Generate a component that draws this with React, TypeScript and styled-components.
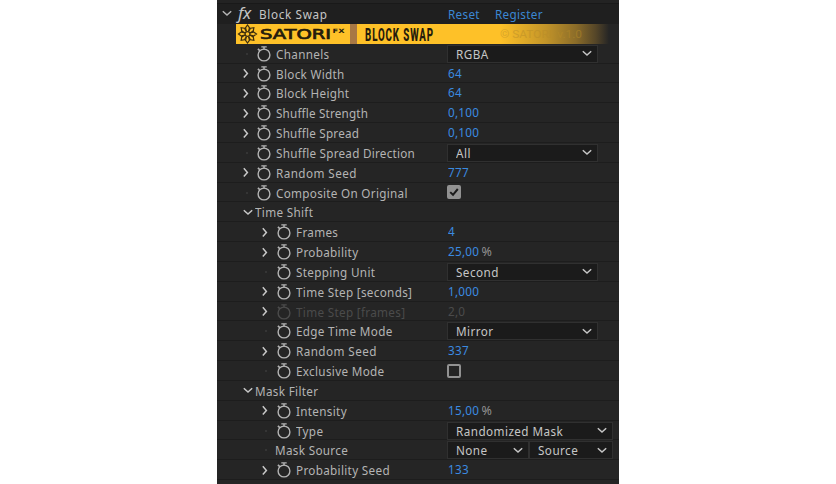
import React from 'react';
import styled, { createGlobalStyle, css } from 'styled-components';

const GlobalStyle = createGlobalStyle`
  * { box-sizing: border-box; }
  body { margin: 0; background: #fff; overflow: hidden; }
`;

const Page = styled.div`
  width: 836px;
  height: 484px;
  background: #fff;
  overflow: hidden;
  font-family: 'Noto Sans', 'Open Sans', sans-serif;
  font-size: 13.3px;
  line-height: 18px;
  color: #b4b4b4;
`;

const Panel = styled.div`
  width: 402px;
  height: 484px;
  margin-left: 217px;
  background: #252525;
  overflow: hidden;
`;

const TopEdge = styled.div`
  height: 4px;
  background: #232323;
  border-bottom: 1px solid #191919;
`;

const Header = styled.div`
  display: flex;
  align-items: center;
  height: 19.6px;
  padding-left: 5px;
  background: #1f1f1f;
`;

const FxMark = styled.span`
  width: 21px;
  margin: -2px 0 0 6px;
  font: italic 17px/18px 'Noto Sans', sans-serif;
  letter-spacing: -0.4px;
  color: #c4c4c4;
`;

const Text = styled.span<{ $sp?: number }>`
  display: inline-block;
  white-space: pre;
  letter-spacing: ${(p) => p.$sp ?? 0.36}px;
  transform: scaleX(0.88);
  transform-origin: left center;
`;

const Title = styled(Text)`
  width: 189px;
  color: #c6c6c6;
`;

const Action = styled(Text)`
  width: 47px;
  color: #3b87d2;
`;

const Banner = styled.div`
  display: flex;
  align-items: center;
  height: 20.2px;
  margin-left: 19px;
  background: linear-gradient(to right, #fec128 0, #fec128 264px, #c29429 310px, #8b6c29 340px, #544528 360px, #252525 373px);
  color: #241b0c;
`;

const Brand = styled.span`
  display: flex;
  align-items: center;
  width: 114px;
  padding-left: 1px;
`;

const BannerDivider = styled.span`
  width: 7px;
  height: 100%;
  background: #a87844;
`;

const BannerText = styled.span`
  display: flex;
  width: 143px;
  padding-left: 8px;
`;

const Row = styled.div`
  display: flex;
  height: 19.84px;
  border-bottom: 1px solid #1d1d1d;
`;

const NameCell = styled.div<{ $level: number; $dim?: boolean }>`
  display: flex;
  flex: none;
  align-items: center;
  width: 230px;
  height: 20px;
  padding-left: ${(p) => p.$level}px;
  color: ${(p) => (p.$dim ? '#4b4b4b' : '#b4b4b4')};
`;

const Twirl = styled.span<{ $w: number }>`
  display: flex;
  flex: none;
  align-items: center;
  width: ${(p) => p.$w}px;
  color: #c8c8c8;
`;

const Dot = styled.i`
  width: 2px;
  height: 2px;
  margin-left: 3px;
  background: #353535;
`;

const ValueCell = styled.div`
  display: flex;
  align-items: center;
  height: 19px;
`;

const Value = styled(Text)<{ $dim?: boolean }>`
  margin: -1px 0 0 1px;
  letter-spacing: 0.29px;
  color: ${(p) => (p.$dim ? '#4b4b4b' : '#3b8be0')};
`;

const Percent = styled.span`
  margin-left: -2px;
  padding-top: 1px;
  font-size: 12.5px;
  color: #929292;
`;

const Select = styled.div<{ $w: number }>`
  display: flex;
  align-items: center;
  justify-content: space-between;
  width: ${(p) => p.$w}px;
  height: 18px;
  margin-top: 1px;
  padding: 0 5px 0 8px;
  border: 1px solid #303030;
  background: #1b1b1b;
  color: #c6c6c6;
`;

const Box = styled.span<{ $on?: boolean }>`
  display: flex;
  width: 14px;
  height: 14px;
  border: 2px solid #929292;
  border-radius: 2px;
  ${(p) => p.$on && css`background: #929292;`}
`;

const ChevronRight = () => (
  <svg width="6" height="11" viewBox="0 0 6 11" fill="none" stroke="currentColor" strokeWidth="1.5">
    <path d="M.8 1.3 4.4 5.4.8 9.5" />
  </svg>
);

const DownSvg = styled.svg`
  flex: none;
`;

const ChevronDown = () => (
  <DownSvg width="10" height="7" viewBox="0 0 10 7" fill="none" stroke="currentColor" strokeWidth="1.5">
    <path d="M.8 1.2 5 5.1 9.2 1.2" />
  </DownSvg>
);

const WatchSvg = styled.svg`
  flex: none;
  margin-right: 4px;
`;

const Stopwatch = () => (
  <WatchSvg width="16" height="18" viewBox="0 0 16 18" fill="none" stroke="currentColor">
    <circle cx="8" cy="10" r="5.9" strokeWidth="1.4" />
    <path d="M5.3 1.9h5.4M8 2v2.4" strokeWidth="1.4" />
    <path d="M1.9 3.9 4 5.9" strokeWidth="1.6" />
  </WatchSvg>
);

const Check = () => (
  <svg width="10" height="10" viewBox="0 0 10 10" fill="none" stroke="#1c1c1c" strokeWidth="2">
    <path d="M1.2 5.1 4 7.8 8.8 2" />
  </svg>
);

const Flower = () => (
  <svg width="21" height="20" viewBox="-10.5 -10 21 20" fill="none" stroke="#3f2f0e" strokeWidth="1.2">
    {[0, 45, 90, 135, 180, 225, 270, 315].map((a) => (
      <path key={a} transform={`rotate(${a})`} d="M-1-2.6-2.7-5.2 0-9 2.7-5.2 1-2.6" />
    ))}
    <circle r="2.4" />
  </svg>
);

const Wordmark = () => (
  <svg width="90" height="20" viewBox="0 0 90 20" fill="#241b0c">
    <text x="2" y="14.9" fontFamily="DejaVu Sans" fontSize="13.6" stroke="#241b0c" strokeWidth=".7" textLength="71" lengthAdjust="spacingAndGlyphs">SATORI</text>
    <text x="74.5" y="9.3" fontFamily="DejaVu Sans" fontWeight="700" fontSize="6" textLength="12" lengthAdjust="spacingAndGlyphs">FX</text>
  </svg>
);

const BannerTitle = () => (
  <svg width="130" height="20" viewBox="0 0 130 20" fill="#241b0c">
    <text x="0" y="16.6" fontFamily="Roboto" fontWeight="800" fontSize="17.5" letterSpacing="1.6" textLength="69" lengthAdjust="spacingAndGlyphs">BLOCK SWAP</text>
  </svg>
);

const Watermark = () => (
  <svg width="100" height="20" viewBox="0 0 100 20" fill="#b88c28" opacity=".5">
    <text x="0" y="14" fontFamily="Roboto" fontSize="11" textLength="82" lengthAdjust="spacingAndGlyphs">© SATORI, v.1.0</text>
  </svg>
);

type Item = {
  name: string;
  level?: 1 | 2;
  open?: boolean;
  twirl?: boolean;
  noWatch?: boolean;
  dim?: boolean;
  value?: string;
  percent?: boolean;
  selects?: [string, number][];
  check?: boolean;
  sp?: number;
};

const items: Item[] = [
  { name: 'Channels', selects: [['RGBA', 151]] },
  { name: 'Block Width', twirl: true, value: '64' },
  { name: 'Block Height', twirl: true, value: '64' },
  { name: 'Shuffle Strength', twirl: true, value: '0,100', sp: 0.2 },
  { name: 'Shuffle Spread', twirl: true, value: '0,100', sp: 0.24 },
  { name: 'Shuffle Spread Direction', selects: [['All', 151]], sp: 0.28 },
  { name: 'Random Seed', twirl: true, value: '777', sp: 0.48 },
  { name: 'Composite On Original', check: true, sp: 0.33 },
  { name: 'Time Shift', open: true },
  { name: 'Frames', level: 2, twirl: true, value: '4' },
  { name: 'Probability', level: 2, twirl: true, value: '25,00', percent: true },
  { name: 'Stepping Unit', level: 2, selects: [['Second', 151]] },
  { name: 'Time Step [seconds]', level: 2, twirl: true, value: '1,000' },
  { name: 'Time Step [frames]', level: 2, twirl: true, dim: true, value: '2,0' },
  { name: 'Edge Time Mode', level: 2, selects: [['Mirror', 151]] },
  { name: 'Random Seed', level: 2, twirl: true, value: '337', sp: 0.48 },
  { name: 'Exclusive Mode', level: 2, check: false },
  { name: 'Mask Filter', open: true },
  { name: 'Intensity', level: 2, twirl: true, value: '15,00', percent: true },
  { name: 'Type', level: 2, selects: [['Randomized Mask', 166]] },
  { name: 'Mask Source', level: 2, noWatch: true, selects: [['None', 82], ['Source', 84]] },
  { name: 'Probability Seed', level: 2, twirl: true, value: '133' },
];

const PropertyRow = ({ item }: { item: Item }) => (
  <Row>
    <NameCell $level={item.level === 2 ? 45 : 26} $dim={item.dim}>
      <Twirl $w={item.open ? 12 : item.noWatch ? 13 : item.level === 2 ? 14 : 13}>
        {item.open ? <ChevronDown /> : item.twirl ? <ChevronRight /> : <Dot />}
      </Twirl>
      {!item.open && !item.noWatch && <Stopwatch />}
      <Text $sp={item.sp}>{item.name}</Text>
    </NameCell>
    <ValueCell>
      {item.value && <Value $dim={item.dim}>{item.value}</Value>}
      {item.percent && <Percent>%</Percent>}
      {item.selects?.map(([label, w]) => (
        <Select key={label} $w={w}>
          <Text $sp={0.5}>{label}</Text>
          <ChevronDown />
        </Select>
      ))}
      {item.check !== undefined && <Box $on={item.check}>{item.check && <Check />}</Box>}
    </ValueCell>
  </Row>
);

export default function App() {
  return (
    <Page>
      <GlobalStyle />
      <Panel>
        <TopEdge />
        <Header>
          <ChevronDown />
          <FxMark>fx</FxMark>
          <Title $sp={0.75}>Block Swap</Title>
          <Action>Reset</Action>
          <Action>Register</Action>
        </Header>
        <Banner>
          <Brand>
            <Flower />
            <Wordmark />
          </Brand>
          <BannerDivider />
          <BannerText>
            <BannerTitle />
          </BannerText>
          <Watermark />
        </Banner>
        {items.map((item, i) => (
          <PropertyRow key={i} item={item} />
        ))}
      </Panel>
    </Page>
  );
}
